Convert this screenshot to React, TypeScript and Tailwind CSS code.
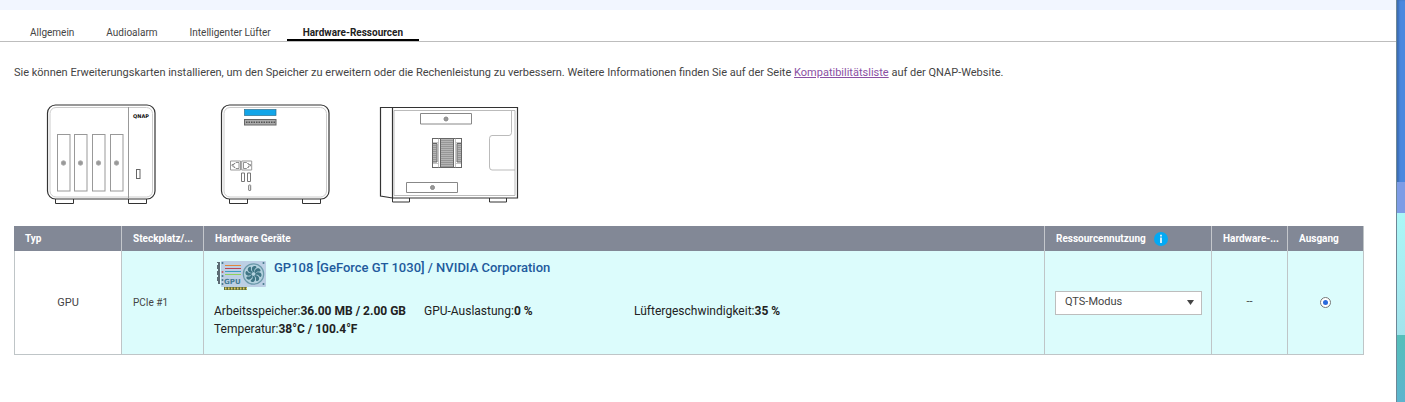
import React from "react";

const tabs = ["Allgemein", "Audioalarm", "Intelligenter Lüfter", "Hardware-Ressourcen"];

function FrontView() {
  return (
    <svg viewBox="46 104 110 101" className="h-[101px] w-[110px] shrink-0" fill="none" stroke="#666" role="img" aria-label="Vorderansicht">
      <g stroke="#333" fill="#fff">
        <path d="M55.500 199v4.500h18V199M128.500 199v4.500h18V199" />
        <rect x="47.500" y="105" width="107.500" height="94" rx="8" strokeWidth="1.200" />
      </g>
      <rect x="50" y="107.500" width="102.500" height="89.500" rx="6" stroke="#ccc" />
      <path d="M128.500 107V199" stroke="#999" />
      {[57.5, 74.5, 92.5, 110.5].map((x) => (
        <g key={x}>
          <rect x={x} y="134.500" width="12.500" height="56.500" stroke="#999" />
          <circle cx={x + 6} cy="163" r="2.200" fill="#999" stroke="#aaa" />
        </g>
      ))}
      <rect x="136.500" y="169.500" width="3.500" height="9" stroke="#666" />
      <text x="133" y="118" fontSize="5" fontWeight="700" fontFamily="DejaVu Sans, sans-serif" fill="#111" stroke="none">QNAP</text>
    </svg>
  );
}

function RearView() {
  return (
    <svg viewBox="220 104 110 101" className="h-[101px] w-[110px] shrink-0" fill="none" stroke="#777" role="img" aria-label="Rückansicht">
      <g stroke="#333" fill="#fff">
        <path d="M229.500 199v4.500h18V199M302.500 199v4.500h18V199" />
        <rect x="221.500" y="105" width="107.500" height="94" rx="8" strokeWidth="1.200" />
      </g>
      <rect x="224" y="107.500" width="102.500" height="89.500" rx="6" stroke="#ccc" />
      <rect x="244.500" y="109.500" width="31.500" height="6" fill="#12a5e8" stroke="#2d6f91" strokeWidth=".7" />
      <rect x="244.500" y="119.500" width="31.500" height="5.500" fill="#aaa" stroke="#666" />
      <path d="M246 122.300h29" stroke="#555" strokeWidth="1.500" strokeDasharray="1.500 1" />
      <path d="M230.500 161h10v9h-10zM241.700 161h10v9h-10z" stroke="#999" />
      <path d="M239 162.500v6h-3l-1-1h-1v-1.500h-2v-1.500h2v-1h1l1-1zM243.500 162.500v6h3l1-1h1v-1.500h2v-1.500h-2v-1h-1l-1-1z" strokeWidth=".8" />
      <path d="M241.500 173h3v8.500h-3zM247.500 173h3v8.500h-3z" />
      <rect x="248.700" y="185" width="2" height="5.500" rx=".5" stroke="#777" />
    </svg>
  );
}

function SideView() {
  return (
    <svg viewBox="379 104 140 101" className="h-[101px] w-[140px] shrink-0" fill="none" stroke="#333" role="img" aria-label="Seitenansicht">
      <path d="M392.500 198v4h17v-4M489.500 198v4h17v-4" />
      <path d="M380.500 107.500H517.500V198H392.500L380.500 196zM392.500 107.500V198" strokeWidth="1.200" />
      <path d="M394 110.500H515V195.500H394zM511.500 111v21.500q0 3-2.500 3h-17q-2.500 0-2.500 3v28.500q0 3 2.500 3H515" stroke="#aaa" strokeWidth=".8" />
      <path d="M420.500 113.500h51v10.500h-51zM406.500 182.500h51v10h-51z" stroke="#888" />
      <g fill="#999" stroke="#888">
        <circle cx="446" cy="119" r="2" />
        <circle cx="432.500" cy="187.500" r="2" />
      </g>
      <rect x="432.500" y="138.500" width="29" height="29" stroke="#666" />
      <g fill="#b5b5b5" stroke="#666">
        <path d="M440.500 138.500h13v29h-13zM432.500 143.500h4.500v18.500h-4.500zM457 143.500h4.500v18.500H457z" />
        <path d="M441 140.500h12m-12 2h12m-12 2h12m-12 2h12m-12 2h12m-12 2h12m-12 2h12m-12 2h12m-12 2h12m-12 2h12m-12 2h12m-12 2h12m-12 2h12m-12 2h12M433 145.500h4m-4 2h4m-4 2h4m-4 2h4m-4 2h4m-4 2h4m-4 2h4m-4 2h4M457 145.500h4m-4 2h4m-4 2h4m-4 2h4m-4 2h4m-4 2h4m-4 2h4m-4 2h4" stroke="#888" strokeWidth=".7" />
      </g>
      <path d="M438.500 142.500v21M455.500 142.500v21M433 142.500h5.500v-4M461 142.500h-5.500v-4M433 163.500h5.500v4M461 163.500h-5.500v4" stroke="#aaa" strokeWidth=".7" />
    </svg>
  );
}

function GpuIcon() {
  return (
    <svg viewBox="0 0 50 30" className="h-[30px] w-[50px] shrink-0" aria-hidden="true">
      <rect x="5" y="1" width="45" height="26" rx="1" fill="#bccfe4" />
      <path d="M1 2h3v22H2v-3H1v-4h1v-2H1v-4h1V9H1V5h1V3H1z" fill="#5c6b74" />
      <path d="M8 27h23v3H8z" fill="#5f6e3c" />
      <path d="M9 28.500h22" stroke="#e3c95d" strokeWidth="2" strokeDasharray="1.500 1.500" />
      <path d="M9 5.500h16" stroke="#e0863a" strokeWidth="1" />
      <path d="M9 8.500h16" stroke="#b8475a" strokeWidth="1" />
      <path d="M9 11.500h16" stroke="#3b9fc0" strokeWidth="1" />
      <path d="M9 14.500h16" stroke="#8fd15c" strokeWidth="1" />
      <g fill="#45798b">
        <circle cx="6.500" cy="3" r="1" />
        <circle cx="6.500" cy="12" r="1" fill="#bb5e63" />
        <circle cx="6.500" cy="16" r="1" />
        <circle cx="6.500" cy="20" r="1" />
        <circle cx="6.500" cy="24" r="1" />
        <circle cx="47.500" cy="3" r="1" />
        <circle cx="47.500" cy="24" r="1" />
      </g>
      <text x="8" y="24" fontSize="7" fontWeight="700" fontFamily="DejaVu Sans, sans-serif" fill="#437c96">GPU</text>
      <circle cx="37.500" cy="14" r="10.200" fill="#b4d2df" stroke="#6b99aa" strokeWidth="1.200" />
      <g fill="#3f7585">
        {[0, 45, 90, 135, 180, 225, 270, 315].map((a) => (
          <path key={a} transform={`rotate(${a} 37.5 14)`} d="M37.500 12.500c-2.500-2-2-6 .5-6.500 2-.3 3 1 2 2-1.500 1-2 2-1.500 4z" />
        ))}
      </g>
      <circle cx="37.500" cy="14" r="1.500" fill="#b4d2df" />
    </svg>
  );
}

const head = "h-[25px] border-l border-[#c4c7cc] pl-[11px] text-left text-[10px] font-bold whitespace-nowrap first:border-[#828896] first:pl-[10px]";
const cell = "border-l border-b border-[#bfc5c7]";

export default function App() {
  return (
    <div className="flex min-h-screen bg-white font-[Roboto,sans-serif] text-[#444]">
      <main className="min-w-0 flex-1">
        <div className="h-[10px] bg-[#f2f6ff]" />
        <nav className="flex h-8 items-end border-b border-[#bdbdbd] pl-[14px]">
          {tabs.map((t, i) => (
            <button
              key={t}
              type="button"
              aria-current={i === 3 ? "page" : undefined}
              className={
                i === 3
                  ? "border-b-2 border-black px-4 text-[10px] leading-3 font-bold text-[#222]"
                  : "border-b-2 border-transparent px-4 text-[10px] leading-3"
              }
            >
              {t}
            </button>
          ))}
        </nav>
        <p className="mt-[23px] px-[14px] text-[11px] leading-4">
          Sie können Erweiterungskarten installieren, um den Speicher zu erweitern oder die Rechenleistung zu verbessern. Weitere Informationen finden Sie auf der Seite{" "}
          <a href="#liste" className="text-[#8a4fa3] underline">Kompatibilitätsliste</a> auf der QNAP-Website.
        </p>
        <div className="mt-[23px] flex pl-[46px]">
          <FrontView />
          <div className="ml-16 mr-[49px]"><RearView /></div>
          <SideView />
        </div>
        <div className="mt-[21px] pr-8 pl-[14px]">
          <table className="w-full table-fixed border-separate border-spacing-0 border-r border-[#bfc5c7]">
            <colgroup>
              <col className="w-[107px]" />
              <col className="w-[82px]" />
              <col />
              <col className="w-[167px]" />
              <col className="w-[76px]" />
              <col className="w-[76px]" />
            </colgroup>
            <thead className="bg-[#828896] text-white">
              <tr>
                <th className={head}>Typ</th>
                <th className={head}>Steckplatz/...</th>
                <th className={head}>Hardware Geräte</th>
                <th className={head}>
                  <span className="flex items-center gap-2">
                    Ressourcennutzung
                    <svg viewBox="0 0 14 14" className="size-[14px]" role="img" aria-label="Info">
                      <circle cx="7" cy="7" r="7" fill="#03a9f4" />
                      <path d="M6.200 2.800h1.600v1.700H6.200zM6.200 5.500h1.600V11H6.200z" fill="#fff" />
                    </svg>
                  </span>
                </th>
                <th className={head}>Hardware-...</th>
                <th className={head}>Ausgang</th>
              </tr>
            </thead>
            <tbody>
              <tr className="h-[104px] bg-[#dcfcfc]">
                <td className={`${cell} bg-white pt-[2px] text-center text-[11px]`}>GPU</td>
                <td className={`${cell} px-[11px] text-[10px]`}>PCIe #1</td>
                <td className={`${cell} pt-[9px] pl-[10px] align-top text-[#222]`}>
                  <div className="flex gap-2 pl-[2px]">
                    <GpuIcon />
                    <h2 className="text-[13px] leading-4 font-medium text-[#225a9c]">GP108 [GeForce GT 1030] / NVIDIA Corporation</h2>
                  </div>
                  <div className="mt-3 grid grid-cols-[210px_210px_1fr] text-[12px] leading-[18px]">
                    <div>Arbeitsspeicher:<b>36.00 MB / 2.00 GB</b></div>
                    <div>GPU-Auslastung:<b>0 %</b></div>
                    <div>Lüftergeschwindigkeit:<b>35 %</b></div>
                    <div>Temperatur:<b>38°C / 100.4°F</b></div>
                  </div>
                </td>
                <td className={`${cell} px-[10px]`}>
                  <div className="grid w-[147px] items-center">
                    <select aria-label="Ressourcennutzung" className="col-start-1 row-start-1 h-6 w-full appearance-none border border-[#bdbdbd] bg-white pl-[9px] text-[11px]">
                      <option>QTS-Modus</option>
                    </select>
                    <svg viewBox="0 0 7 5" className="pointer-events-none col-start-1 row-start-1 mr-2 h-[5px] w-[7px] justify-self-end" aria-hidden="true">
                      <path d="M0 0h7L3.500 5z" fill="#444" />
                    </svg>
                  </div>
                </td>
                <td className={`${cell} text-center text-[11px]`}>--</td>
                <td className={`${cell} text-center text-[0px]`}>
                  <input type="radio" name="ausgang" aria-label="Ausgang" defaultChecked className="inline-grid size-[11px] appearance-none place-items-center rounded-full border border-[#777] bg-white align-middle before:size-[5px] before:rounded-full before:bg-[#2969dc]" />
                </td>
              </tr>
            </tbody>
          </table>
        </div>
      </main>
      <aside aria-hidden="true" className="flex w-[9px] shrink-0 flex-col border-l border-[#6d8796] bg-[#4b88df] shadow-[inset_2px_0_2px_#00000033]">
        <div className="h-[182px]" />
        <div className="h-[31px] bg-[#7d9ce6]" />
        <div className="h-[122px] bg-linear-to-b from-[#abf7f7] to-[#a2e3ec]" />
        <div className="flex-1 bg-linear-to-b from-[#55bfba] to-[#5cb4ce]" />
      </aside>
    </div>
  );
}
